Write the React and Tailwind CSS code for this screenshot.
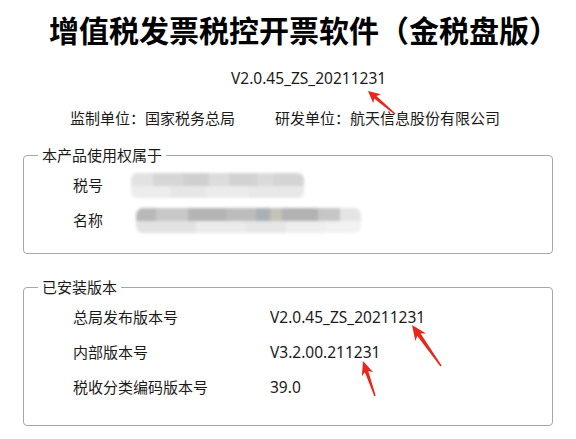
import React from "react";

function arrowPoints(tx, ty, ex, ey, hl = 13, hw = 6, sw = 2) {
  const dx = ex - tx;
  const dy = ey - ty;
  const L = Math.hypot(dx, dy);
  const ux = dx / L;
  const uy = dy / L;
  const px = -uy;
  const py = ux;
  const pts = [
    [tx, ty],
    [tx + ux * hl + px * hw, ty + uy * hl + py * hw],
    [tx + ux * hl * 0.8 + px * sw, ty + uy * hl * 0.8 + py * sw],
    [ex + px * 0.7, ey + py * 0.7],
    [ex - px * 0.7, ey - py * 0.7],
    [tx + ux * hl * 0.8 - px * sw, ty + uy * hl * 0.8 - py * sw],
    [tx + ux * hl - px * hw, ty + uy * hl - py * hw],
  ];
  return pts.map((p) => p.map((v) => v.toFixed(1)).join(",")).join(" ");
}

function Blur1() {
  return (
    <div className="flex flex-col w-[173px] h-[25px] rounded-[6px] overflow-hidden blur-[1.5px]">
      <div className="flex h-[13px]">
        <div className="w-[22px] bg-[#e2e2e2]" />
        <div className="w-[30px] bg-[#d6d6d6]" />
        <div className="w-[26px] bg-[#cfcfcf]" />
        <div className="w-[20px] bg-[#dcdcdc]" />
        <div className="w-[28px] bg-[#d2d2d2]" />
        <div className="w-[16px] bg-[#dadada]" />
        <div className="flex-1 bg-[#d4d4d4]" />
      </div>
      <div className="flex h-[12px]">
        <div className="w-[40px] bg-[#ececec]" />
        <div className="w-[34px] bg-[#e6e6e6]" />
        <div className="w-[44px] bg-[#ebebeb]" />
        <div className="flex-1 bg-[#e8e8e8]" />
      </div>
    </div>
  );
}

function Blur2() {
  return (
    <div className="flex flex-col w-[225px] h-[25px] rounded-[7px] overflow-hidden blur-[1.5px] ml-[5px]">
      <div className="flex h-[13px]">
        <div className="w-[20px] bg-[#b8b8b8]" />
        <div className="w-[32px] bg-[#c8c8c8]" />
        <div className="w-[38px] bg-[#b4b4b4]" />
        <div className="w-[30px] bg-[#bcbcbc]" />
        <div className="w-[14px] bg-[#aab0b4]" />
        <div className="w-[12px] bg-[#c4c2b8]" />
        <div className="w-[36px] bg-[#b2b2b2]" />
        <div className="w-[22px] bg-[#c6c6c6]" />
        <div className="flex-1 bg-[#e4e4e4]" />
      </div>
      <div className="flex h-[12px]">
        <div className="w-[60px] bg-[#e2e2e2]" />
        <div className="w-[50px] bg-[#ebebeb]" />
        <div className="w-[40px] bg-[#e6e6e6]" />
        <div className="w-[40px] bg-[#eeeeee]" />
        <div className="flex-1 bg-[#f2f2f2]" />
      </div>
    </div>
  );
}

function Row({ label, value }) {
  return (
    <div className="flex items-center h-[35px] pl-[49px] whitespace-nowrap">
      <div className="w-[197px] shrink-0">{label}</div>
      <div className="text-[15.5px]">{value}</div>
    </div>
  );
}

export default function App() {
  const font = {
    fontFamily: '"Noto Sans", "Noto Sans CJK SC", sans-serif',
  };
  return (
    <div
      className="relative w-[576px] h-[439px] bg-white text-[#1a1a1a] overflow-hidden flex flex-col"
      style={font}
    >
      <h1 className="pt-[13px] pl-[49px] text-[30px] leading-[36px] font-bold text-black whitespace-nowrap">
        增值税发票税控开票软件（金税盘版）
      </h1>
      <div className="mt-[19px] pl-[231px] text-[15.5px] leading-[20px]">
        V2.0.45_ZS_20211231
      </div>
      <div className="mt-[20px] pl-[70px] flex text-[15px] leading-[20px] whitespace-nowrap">
        <span>监制单位：国家税务总局</span>
        <span className="ml-[40px]">研发单位：航天信息股份有限公司</span>
      </div>

      <fieldset className="mt-[17px] mx-[23px] border border-[#a6a6a6] rounded-[4px] pt-[3px] pb-[15px] text-[15px]">
        <legend className="ml-[14px] px-[4px] leading-[20px]">本产品使用权属于</legend>
        <div className="flex items-center h-[35px] pl-[49px] whitespace-nowrap">
          <span className="w-[58px] shrink-0">税号</span>
          <Blur1 />
        </div>
        <div className="flex items-center h-[35px] pl-[49px] whitespace-nowrap">
          <span className="w-[58px] shrink-0">名称</span>
          <Blur2 />
        </div>
      </fieldset>

      <fieldset className="mt-[23px] mx-[23px] border border-[#a6a6a6] rounded-[4px] pt-[3px] pb-[20px] text-[15px]">
        <legend className="ml-[14px] px-[4px] leading-[20px]">已安装版本</legend>
        <Row label="总局发布版本号" value="V2.0.45_ZS_20211231" />
        <Row label="内部版本号" value="V3.2.00.211231" />
        <Row label="税收分类编码版本号" value="39.0" />
      </fieldset>

      <svg
        className="absolute left-0 top-0 pointer-events-none"
        width="576"
        height="439"
        viewBox="0 0 576 439"
      >
        <polygon points={arrowPoints(368, 91, 395, 114, 12, 6, 1.8)} fill="#e8261c" />
        <polygon points={arrowPoints(412, 325, 441, 366, 15, 6.5, 2)} fill="#e8261c" />
        <polygon points={arrowPoints(363, 361, 375, 396, 14, 6, 1.8)} fill="#e8261c" />
      </svg>
    </div>
  );
}
